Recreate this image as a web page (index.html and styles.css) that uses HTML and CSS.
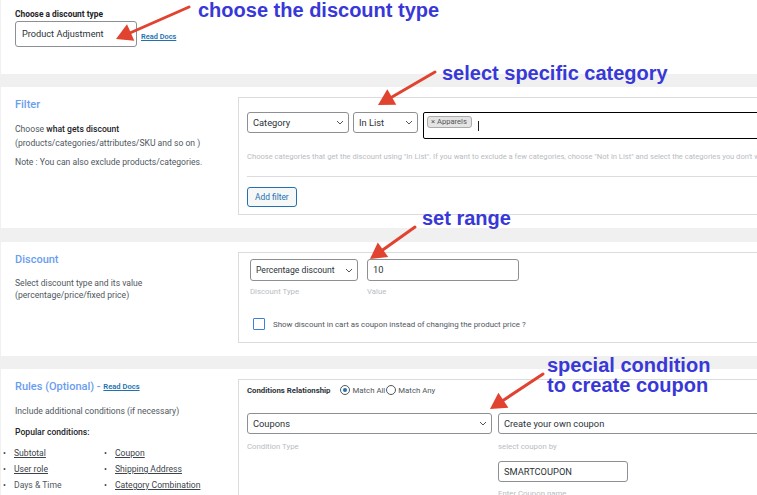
FILE: index.html
```html
<!DOCTYPE html>
<html lang="en">
  <head>
    <meta charset="UTF-8" />
    <meta name="viewport" content="width=device-width, initial-scale=1.0" />
    <title>Discount rule</title>
    <link rel="stylesheet" href="styles.css">
  </head>
  <body>
    <main class="page">
      <!-- discount type -->
      <section class="card card-type">
        <p class="type-label">Choose a discount type</p>
        <div class="type-row">
          <div class="type-select">Product Adjustment</div>
          <a class="docs" href="#">Read Docs</a>
        </div>
      </section>

      <!-- filter -->
      <section class="card card-filter">
        <div class="info">
          <h2>Filter</h2>
          <p class="info-text">Choose <b>what gets discount</b><br>(products/categories/attributes/SKU and so on )</p>
          <p class="info-note">Note : You can also exclude products/categories.</p>
        </div>
        <div class="box filter-box">
          <div class="filter-row">
            <div class="select sel-category">Category
              <svg class="chev" width="8" height="5" viewBox="0 0 8 5"><path d="M1 1l3 3 3-3" /></svg>
            </div>
            <div class="select sel-inlist">In List
              <svg class="chev" width="8" height="5" viewBox="0 0 8 5"><path d="M1 1l3 3 3-3" /></svg>
            </div>
            <div class="multi">
              <span class="tag">× Apparels</span>
              <span class="caret"></span>
            </div>
          </div>
          <p class="hint">Choose categories that get the discount using "In List". If you want to exclude a few categories, choose "Not in List" and select the categories you don't want to apply the discount</p>
          <hr class="rule-line">
          <button class="btn">Add filter</button>
        </div>
      </section>

      <!-- discount -->
      <section class="card card-discount">
        <div class="info">
          <h2>Discount</h2>
          <p class="info-text tight">Select discount type and its value<br>(percentage/price/fixed price)</p>
        </div>
        <div class="box discount-box">
          <div class="field-row">
            <div class="field">
              <div class="select sel-percent">Percentage discount
                <svg class="chev" width="8" height="5" viewBox="0 0 8 5"><path d="M1 1l3 3 3-3" /></svg>
              </div>
              <span class="field-label">Discount Type</span>
            </div>
            <div class="field">
              <div class="input inp-value">10</div>
              <span class="field-label">Value</span>
            </div>
          </div>
          <div class="check-row">
            <span class="checkbox"></span>
            <span>Show discount in cart as coupon instead of changing the product price ?</span>
          </div>
        </div>
      </section>

      <!-- rules -->
      <section class="card card-rules">
        <div class="info">
          <h2>Rules (Optional) - <a class="docs" href="#">Read Docs</a></h2>
          <p class="info-text">Include additional conditions (if necessary)</p>
          <p class="popular">Popular conditions:</p>
          <ul class="cond-list">
            <li><a href="#">Subtotal</a></li>
            <li><a href="#">Coupon</a></li>
            <li><a href="#">User role</a></li>
            <li><a href="#">Shipping Address</a></li>
            <li>Days &amp; Time</li>
            <li><a href="#">Category Combination</a></li>
          </ul>
        </div>
        <div class="box rules-box">
          <div class="relation">
            <b>Conditions Relationship</b>
            <span class="radio on"></span><span class="radio-text">Match All</span>
            <span class="radio"></span><span class="radio-text">Match Any</span>
          </div>
          <div class="field-row cond-row">
            <div class="field">
              <div class="select sel-coupons">Coupons
                <svg class="chev" width="8" height="5" viewBox="0 0 8 5"><path d="M1 1l3 3 3-3" /></svg>
              </div>
              <span class="field-label">Condition Type</span>
            </div>
            <div class="field">
              <div class="select sel-create">Create your own coupon
                <svg class="chev" width="8" height="5" viewBox="0 0 8 5"><path d="M1 1l3 3 3-3" /></svg>
              </div>
              <span class="field-label">select coupon by</span>
              <div class="input inp-coupon">SMARTCOUPON</div>
              <span class="field-label">Enter Coupon name</span>
            </div>
          </div>
        </div>
      </section>
    </main>

    <!-- annotations drawn over the screenshot -->
    <svg class="arrows" width="757" height="495" viewBox="0 0 757 495">
      <g stroke="#e0432f" stroke-width="3" stroke-linecap="round">
        <line x1="189" y1="7" x2="131" y2="32.5" />
        <line x1="435" y1="72" x2="392" y2="97" />
        <line x1="415" y1="227" x2="383" y2="249.7" />
        <line x1="543" y1="374" x2="503.4" y2="400.2" />
      </g>
      <g fill="#e0432f">
        <polygon points="116,39 134.3,40.7 127,24.3" />
        <polygon points="378,105 396.3,104.8 387.3,89.2" />
        <polygon points="370,259 388.2,257 377.8,242.4" />
        <polygon points="490,409 508.4,407.7 498.4,392.7" />
      </g>
    </svg>
    <div class="note note-type">choose the discount type</div>
    <div class="note note-category">select specific category</div>
    <div class="note note-range">set range</div>
    <div class="note note-coupon">special condition<br>to create coupon</div>
  </body>
</html>
```

FILE: styles.css
```css
html,
body {
  margin: 0;
  padding: 0;
  width: 757px;
  height: 495px;
  overflow: hidden;
}

body {
  position: relative;
  background: #f0f0f1;
  font-family: "Roboto", "Liberation Sans", sans-serif;
  color: #50575e;
}

p,
h2,
ul {
  margin: 0;
}

a {
  color: inherit;
}

.page {
  padding-left: 1px;
}

.card {
  display: flex;
  background: #ffffff;
  padding: 10px 0 13px 14px;
}

/* discount type */
.card-type {
  display: block;
  height: 74px;
  box-sizing: border-box;
  padding-top: 9px;
}
.type-label {
  font-size: 8.4px;
  font-weight: 700;
  line-height: 11px;
  color: #1d2327;
}
.type-row {
  display: flex;
  align-items: flex-start;
  gap: 4px;
  margin-top: 1px;
}
.type-select {
  width: 122px;
  height: 26px;
  box-sizing: border-box;
  border: 1px solid #8c8f94;
  border-radius: 3px;
  padding-left: 6px;
  font-size: 9.2px;
  line-height: 24px;
  color: #2c3338;
}
.docs {
  color: #2271b1;
  font-size: 7.4px;
  font-weight: 600;
  margin-top: 11px;
}

.card-filter,
.card-rules {
  margin-top: 13px;
}
.card-discount {
  margin-top: 14px;
}

/* left column */
.info {
  width: 223px;
  flex: none;
  padding-top: 1px;
}
.info h2 {
  font-size: 11px;
  font-weight: 500;
  line-height: 14px;
  color: #6a9df0;
}
.info h2 .docs {
  font-size: 7.6px;
  vertical-align: 1px;
}
.info-text {
  margin-top: 9.5px;
  font-size: 8.6px;
  line-height: 14px;
}
.info-text.tight {
  line-height: 12.5px;
}
.info-text b {
  font-weight: 500;
  color: #1d2327;
}
.info-note {
  margin-top: 5.5px;
  font-size: 8.6px;
  line-height: 14px;
}
.popular {
  margin-top: 7.5px;
  font-size: 8.6px;
  line-height: 14px;
  font-weight: 500;
  color: #1d2327;
}
.cond-list {
  list-style: none;
  padding: 0;
  margin: 6px 0 0 -12px;
  display: grid;
  grid-template-columns: 101px 1fr;
  font-size: 8.6px;
  line-height: 16px;
}
.cond-list li::before {
  content: "•";
  display: inline-block;
  width: 11px;
  color: #3c434a;
}
.cond-list a {
  color: #3c434a;
}

/* right column boxes */
.box {
  width: 540px;
  flex: none;
  box-sizing: border-box;
  border: 1px solid #dcdcde;
}

.select,
.input {
  height: 21px;
  box-sizing: border-box;
  border: 1px solid #8c8f94;
  border-radius: 3px;
  font-size: 9.3px;
  line-height: 19px;
  color: #2c3338;
  padding-left: 5px;
}
.select {
  display: flex;
  justify-content: space-between;
  align-items: center;
  padding-right: 4px;
}
.chev {
  flex: none;
}
.chev path {
  fill: none;
  stroke: #50575e;
  stroke-width: 1;
}

.filter-box {
  padding: 14px 8px 7px;
}
.filter-row {
  display: flex;
  align-items: flex-start;
}
.sel-category {
  width: 102px;
  margin-right: 4px;
}
.sel-inlist {
  width: 65px;
  margin-right: 5px;
}
.multi {
  flex: 1;
  height: 27px;
  box-sizing: border-box;
  border: 1.5px solid #000000;
  border-radius: 2px;
  display: flex;
  align-items: flex-start;
  padding: 3px 3px;
  gap: 6px;
}
.tag {
  height: 12px;
  box-sizing: border-box;
  padding: 0 4px 0 3px;
  border: 1px solid #aaaaaa;
  border-radius: 3px;
  background: #e4e4e4;
  font-size: 7.6px;
  line-height: 10px;
  color: #555555;
}
.caret {
  width: 1px;
  height: 10px;
  margin-top: 5px;
  background: #1d2327;
}
.hint {
  margin-top: 13px;
  font-size: 7.6px;
  line-height: 10px;
  color: #b9bcbf;
  white-space: nowrap;
}
.rule-line {
  border: 0;
  border-top: 1px solid #dcdcde;
  margin: 14px 0 0;
}
.btn {
  margin-top: 10px;
  height: 20px;
  padding: 0 7px;
  border: 1px solid #2271b1;
  border-radius: 3px;
  background: #f6f7f7;
  color: #2271b1;
  font-family: inherit;
  font-size: 8.4px;
}

.field-row {
  display: flex;
  align-items: flex-start;
}
.field {
  display: flex;
  flex-direction: column;
}
.field-label {
  margin-top: 6px;
  font-size: 7.8px;
  line-height: 10px;
  color: #b9bcbf;
}

.discount-box {
  padding: 6px 10px 12px 11px;
}
.discount-box .field-row {
  gap: 9px;
}
.sel-percent {
  width: 108px;
  height: 22px;
  font-size: 8.6px;
}
.inp-value {
  width: 152px;
  height: 22px;
  line-height: 20px;
}
.check-row {
  display: flex;
  align-items: center;
  gap: 8px;
  margin: 21px 0 0 3px;
  font-size: 7.9px;
  color: #50575e;
}
.checkbox {
  width: 12px;
  height: 12px;
  box-sizing: border-box;
  border: 1.5px solid #3f7fd6;
  border-radius: 1px;
}

.rules-box {
  padding: 5px 8px 0;
}
.relation {
  display: flex;
  align-items: center;
  height: 10px;
  font-size: 7.8px;
  color: #50575e;
}
.relation b {
  color: #2c3338;
  margin-right: 10px;
}
.radio {
  width: 10px;
  height: 10px;
  box-sizing: border-box;
  border: 1px solid #50575e;
  border-radius: 50%;
  margin-right: 2px;
  position: relative;
}
.radio.on::after {
  content: "";
  position: absolute;
  left: 2px;
  top: 2px;
  width: 4px;
  height: 4px;
  border-radius: 50%;
  background: #2271b1;
}
.radio-text {
  margin-right: 1px;
}
.cond-row {
  margin-top: 18px;
  gap: 6px;
}
.cond-row .field-label {
  margin-top: 8px;
}
.sel-coupons {
  width: 245px;
}
.sel-create {
  width: 300px;
}
.inp-coupon {
  width: 130px;
  margin-top: 9px;
}
.cond-row .inp-coupon + .field-label {
  margin-top: 7px;
}

/* annotations */
.arrows {
  position: absolute;
  left: 0;
  top: 0;
  pointer-events: none;
}
.note {
  position: absolute;
  font-family: "Liberation Sans", Arial, sans-serif;
  font-weight: 700;
  font-size: 20px;
  line-height: 20px;
  color: #3838d8;
  white-space: nowrap;
}
.note-type {
  left: 198px;
  top: 0;
}
.note-category {
  left: 442px;
  top: 63px;
}
.note-range {
  left: 422px;
  top: 208px;
}
.note-coupon {
  left: 547px;
  top: 356px;
  line-height: 19.5px;
}
```
